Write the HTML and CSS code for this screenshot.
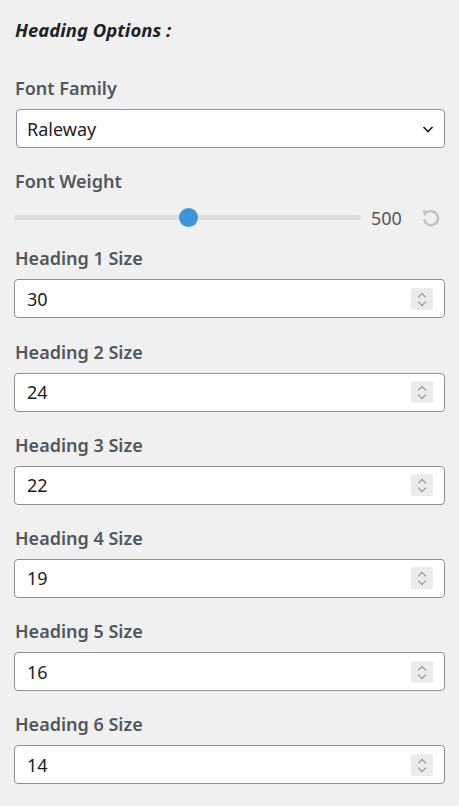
FILE: index.html
```html
<!DOCTYPE html>
<html lang="en">
    <head>
        <meta charset="UTF-8">
        <meta name="viewport" content="width=device-width, initial-scale=1.0">
        <title>Heading Options</title>
        <link rel="stylesheet" href="styles.css">
    </head>
    <body>
        <h2 class="title">Heading Options :</h2>

        <div class="field">
            <label class="label">Font Family</label>
            <div class="select">
                <span>Raleway</span>
                <svg class="chevron" width="14" height="14" viewBox="0 0 14 14"><path d="M2.5 5l4.5 4.5 4.5-4.5" fill="none" stroke="#1e1e1e" stroke-width="1.7"/></svg>
            </div>
        </div>

        <div class="field">
            <label class="label">Font Weight</label>
            <div class="range">
                <div class="track"><div class="thumb"></div></div>
                <span class="range-value">500</span>
                <svg class="reset" width="20" height="20" viewBox="0 0 20 20"><path d="M5.6 4.8A7 7 0 1 1 3.1 11.2" fill="none" stroke="#c3c4c7" stroke-width="2.6"/><path d="M1.6 2.2l7.2 0.9-5.6 5.2z" fill="#c3c4c7"/></svg>
            </div>
        </div>

        <div class="field">
            <label class="label">Heading 1 Size</label>
            <div class="number"><span>30</span><span class="spin"></span></div>
        </div>
        <div class="field">
            <label class="label">Heading 2 Size</label>
            <div class="number"><span>24</span><span class="spin"></span></div>
        </div>
        <div class="field">
            <label class="label">Heading 3 Size</label>
            <div class="number"><span>22</span><span class="spin"></span></div>
        </div>
        <div class="field">
            <label class="label">Heading 4 Size</label>
            <div class="number"><span>19</span><span class="spin"></span></div>
        </div>
        <div class="field">
            <label class="label">Heading 5 Size</label>
            <div class="number"><span>16</span><span class="spin"></span></div>
        </div>
        <div class="field">
            <label class="label">Heading 6 Size</label>
            <div class="number"><span>14</span><span class="spin"></span></div>
        </div>
    </body>
</html>
```

FILE: styles.css
```css
body {
    margin: 0;
    padding: 17px 14px 0 14px;
    background-color: #f0f0f1;
    font-family: "Noto Sans", sans-serif;
    color: #1e1e1e;
}

.title {
    margin: 0 0 34px 1px;
    font-size: 18.5px;
    line-height: 25px;
    font-style: italic;
    font-weight: 700;
    color: #1d2327;
}

.field {
    margin-bottom: 21.2px;
}

.label {
    display: block;
    margin: 0 0 8px 1px;
    font-size: 18px;
    line-height: 25px;
    font-weight: 600;
    color: #50575e;
}

.select, .number {
    box-sizing: border-box;
    height: 39px;
    background-color: #fff;
    border: 1px solid #8c8f94;
    border-radius: 4px;
    display: flex;
    align-items: center;
    justify-content: space-between;
    font-size: 18px;
    color: #1e1e1e;
}

.select {
    margin-left: 2px;
    padding: 0 9px 0 10px;
}

.number {
    padding: 0 11px 0 12px;
}

.chevron {
    display: block;
}

.spin {
    width: 22px;
    height: 22px;
    border-radius: 2px;
    background-color: #ebebeb;
    position: relative;
}

.spin::before, .spin::after {
    content: "";
    position: absolute;
    left: 8px;
    width: 5px;
    height: 5px;
    border-left: 1.5px solid #8c8f94;
    border-top: 1.5px solid #8c8f94;
}

.spin::before {
    top: 6px;
    transform: rotate(45deg);
}

.spin::after {
    top: 11px;
    transform: rotate(225deg);
}

.range {
    height: 31px;
    display: flex;
    align-items: center;
    margin-bottom: -8px;
}

.track {
    flex: 0 0 347px;
    height: 5px;
    background-color: #dcdcde;
    border-radius: 3px;
    position: relative;
}

.thumb {
    position: absolute;
    left: 165px;
    top: -7px;
    width: 19px;
    height: 19px;
    border-radius: 50%;
    background-color: #3a95dd;
}

.range-value {
    margin-left: 10px;
    font-size: 18px;
    color: #50575e;
}

.reset {
    margin-left: 19px;
}
```
